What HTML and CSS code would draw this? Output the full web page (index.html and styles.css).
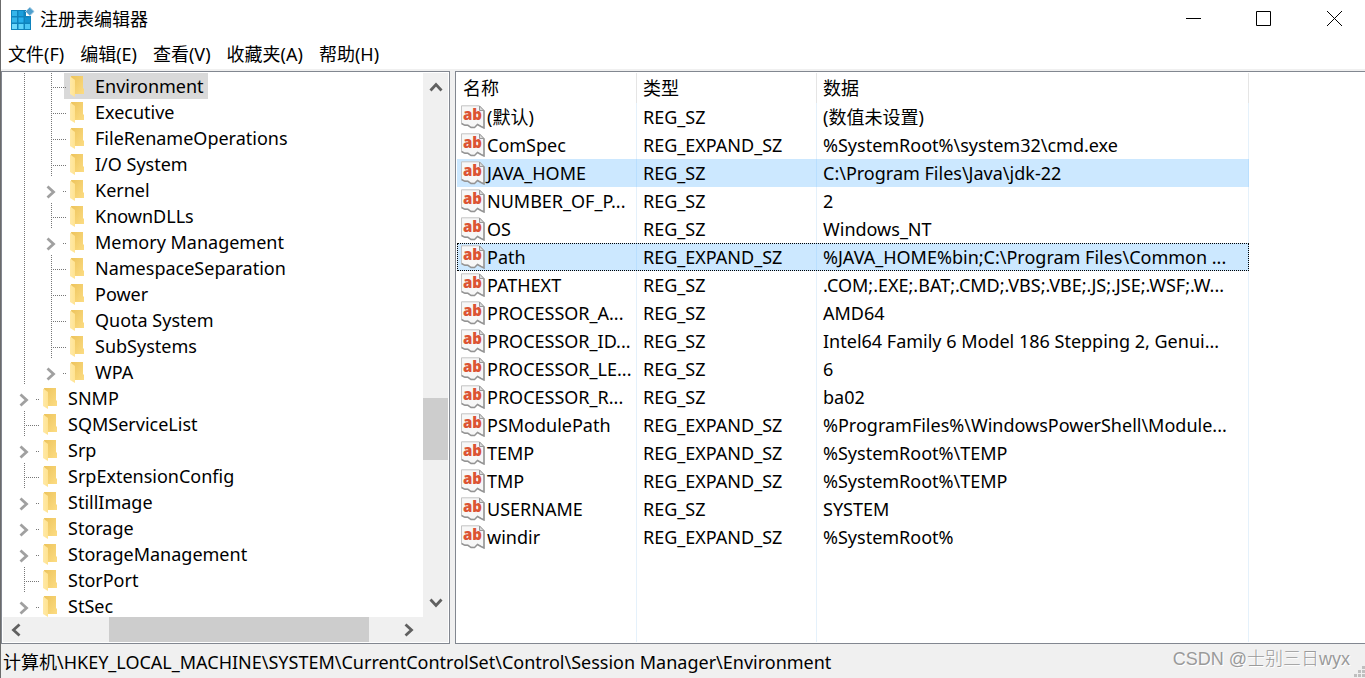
FILE: index.html
```html
<!DOCTYPE html>
<html lang="zh-CN">
<head>
<meta charset="utf-8">
<title>注册表编辑器</title>
<link rel="stylesheet" href="styles.css">
</head>
<body>
<svg class="defs" aria-hidden="true">
  <defs>
    <linearGradient id="foldBack" x1="0" x2="1" y1="0" y2="1"><stop offset="0" stop-color="#edc45c"/><stop offset="1" stop-color="#fcdc83"/></linearGradient>
    <linearGradient id="foldFront" x1="0" x2="1"><stop offset="0" stop-color="#ffe9a8"/><stop offset="1" stop-color="#ffe391"/></linearGradient>
    <symbol id="folder" viewBox="0 0 14 21">
      <path d="M1 0H13V12L14 13V18H3Z" fill="url(#foldBack)"/>
      <path d="M0 0.500L5 4V21L0 18Z" fill="url(#foldFront)"/>
    </symbol>
    <symbol id="value" viewBox="0 0 24 24">
      <path d="M.5 .8H18.500L23 5.500V23L19.500 21 16.500 19.500 13.500 22.500 9.500 22 6.500 20 3 20 .5 18.500Z" fill="#f7f7f7" stroke="#c4c4c4" stroke-width="1"/>
      <path d="M.5 18.500L4 20.300H7L10 22.500H13.500L16.500 19.500 20 21.500 23 23V5.500" fill="none" stroke="#949494" stroke-width="1.500"/>
      <path d="M18.500 1V5.500H23Z" fill="#dadada" stroke="#999"/>
      <text class="value-ab" x="2" y="15">ab</text>
    </symbol>
    <symbol id="chev" viewBox="0 0 10 14"><path d="M1.500 1.500L7.500 7L1.500 12.500" fill="none" stroke="currentColor" stroke-width="2.800"/></symbol>
  </defs>
</svg>

<div class="window">
  <header class="titlebar">
    <svg class="app-icon" viewBox="0 0 24 24" aria-hidden="true">
      <path d="M0 3H15V9H20V23H0Z" fill="#0f83bd"/>
      <path d="M1 4H6V9H1Z" fill="#35b5ea"/><path d="M7.500 4H12.500V9H7.500Z" fill="#1b9fdd"/>
      <path d="M1 10.500H6V15.500H1Z" fill="#35b5ea"/><path d="M7.500 10.500H12.500V15.500H7.500Z" fill="#28b0ee"/><path d="M14 10.500H19V15.500H14Z" fill="#1391d0"/>
      <path d="M1 17H6V22H1Z" fill="#6fd8fb"/><path d="M7.500 17H12.500V22H7.500Z" fill="#5fd2fa"/><path d="M14 17H19V22H14Z" fill="#4bc5f5"/>
      <path d="M18.800 .2L23.200 4.500L18.800 8.800L14.500 4.500Z" fill="#4f9fce" stroke="#b7d6e8"/>
    </svg>
    <h1 class="title">注册表编辑器</h1>
    <div class="window-controls">
      <button class="control" aria-label="最小化"><svg viewBox="0 0 15 15"><path d="M0 7.500H15" /></svg></button>
      <button class="control" aria-label="最大化"><svg viewBox="0 0 15 15"><path d="M.5 .5H14.500V14.500H.5Z"/></svg></button>
      <button class="control" aria-label="关闭"><svg viewBox="0 0 15 15"><path d="M0 0L15 15M15 0L0 15"/></svg></button>
    </div>
  </header>
  <nav class="menubar">
    <button>文件(F)</button><button>编辑(E)</button><button>查看(V)</button><button>收藏夹(A)</button><button>帮助(H)</button>
  </nav>
  <main class="panes">
    <section class="tree-pane">
      <ul class="tree" id="tree"></ul>
      <div class="scroll-v">
        <button aria-label="向上滚动"><svg class="up"><use href="#chev"/></svg></button>
        <div class="track-v"><div class="thumb-v"></div></div>
        <button aria-label="向下滚动"><svg class="down"><use href="#chev"/></svg></button>
      </div>
      <div class="scroll-h">
        <button aria-label="向左滚动"><svg class="left"><use href="#chev"/></svg></button>
        <div class="track-h"><div class="thumb-h"></div></div>
        <button aria-label="向右滚动"><svg><use href="#chev"/></svg></button>
      </div>
    </section>
    <section class="list-pane">
      <table class="values">
        <colgroup><col class="col-name"><col class="col-type"><col class="col-data"></colgroup>
        <thead><tr><th>名称</th><th>类型</th><th>数据</th></tr></thead>
        <tbody id="values"></tbody>
      </table>
      <div class="columns-rest"><span></span><span></span><span></span></div>
    </section>
  </main>
  <footer class="statusbar">
    <span>计算机\HKEY_LOCAL_MACHINE\SYSTEM\CurrentControlSet\Control\Session Manager\Environment</span>
    <svg class="grip" viewBox="0 0 11 11" aria-hidden="true"><path d="M8 0h3v3H8zM4 4h3v3H4zM8 4h3v3H8zM0 8h3v3H0zM4 8h3v3H4zM8 8h3v3H8z" fill="#bfbfbf"/></svg>
  </footer>
  <div class="watermark">CSDN @士别三日wyx</div>
</div>
<script src="app.js"></script>
</body>
</html>
```
FILE: styles.css
```css
* { box-sizing: border-box; }

body {
  margin: 0;
  font: 18px/26px "Noto Sans", "Noto Sans CJK SC", sans-serif;
  color: #000;
  background: #fff;
}

button {
  border: 0;
  padding: 0;
  background: none;
  font: inherit;
  color: inherit;
}

.defs { position: absolute; width: 0; height: 0; }

.window {
  position: relative;
  display: flex;
  flex-direction: column;
  height: 100vh;
  border-left: 1px solid #6b6b6b;
  overflow: hidden;
}

.titlebar {
  display: flex;
  align-items: center;
  height: 37px;
  padding-left: 10px;
}
.app-icon { width: 24px; height: 24px; margin-right: 5px; }
.title { margin: 0; font-size: 18px; font-weight: 400; }
.window-controls { display: flex; margin-left: auto; }
.control {
  display: flex;
  align-items: center;
  justify-content: center;
  width: 70px;
  height: 37px;
}
.control svg { width: 15px; height: 15px; fill: none; stroke: #000; }
.control:last-child { width: 62px; margin-left: 5px; }

.menubar {
  display: flex;
  align-items: center;
  gap: 16px;
  height: 34px;
  padding: 2px 0 0 7px;
  border-bottom: 2px solid #f0f0f0;
}

.panes {
  flex: 1;
  min-height: 0;
  display: grid;
  grid-template-columns: 449px 1fr;
  gap: 5px;
  background: #f0f0f0;
}

.tree-pane {
  display: grid;
  grid-template: minmax(0, 1fr) 25px / minmax(0, 1fr) 25px;
  min-height: 0;
  padding: 1px;
  border: 1px solid #828790;
  background: #fff;
}
.tree {
  margin: 0;
  padding: 0 0 0 7px;
  list-style: none;
  overflow: hidden;
  white-space: nowrap;
}
.node { display: flex; height: 26px; }
.guide { position: relative; flex: 0 0 27px; height: 26px; }
.guide.line {
  background: repeating-linear-gradient(#777 0 1px, transparent 1px 2px) 14px 0 / 1px 100% no-repeat;
}
.guide.branch::after {
  content: "";
  position: absolute;
  top: 14px;
  left: 14px;
  width: 15px;
  height: 1px;
  background: repeating-linear-gradient(90deg, #777 0 1px, transparent 1px 2px);
}
.guide.expander::after { left: 26px; width: 3px; }
.expander button { display: block; padding: 8px 0 0 9px; color: #a0a0a0; }
.expander svg { display: block; width: 10px; height: 14px; }
.label {
  display: flex;
  align-items: center;
  gap: 11px;
  padding: 0 4px 0 6px;
}
.label.selected { background: #d9d9d9; }
.label svg { width: 14px; height: 21px; }

.scroll-v, .scroll-h { display: flex; background: #f0f0f0; }
.scroll-v { grid-row: 1; grid-column: 2; flex-direction: column; }
.scroll-h { grid-row: 2; grid-column: 1 / 3; padding-right: 26px; }
.scroll-v button, .scroll-h button {
  display: flex;
  align-items: center;
  justify-content: center;
  flex: 0 0 28px;
  color: #606060;
}
.scroll-h button { flex-basis: 26px; }
.scroll-v svg, .scroll-h svg { width: 10px; height: 14px; }
.up { transform: rotate(-90deg); }
.down { transform: rotate(90deg); }
.left { transform: rotate(180deg); }
.track-v, .track-h { flex: 1; display: flex; }
.track-v { flex-direction: column; padding-top: 297px; }
.thumb-v { height: 62px; background: #cdcdcd; }
.track-h { padding-left: 80px; }
.thumb-h { width: 260px; background: #cdcdcd; }

.list-pane {
  display: flex;
  flex-direction: column;
  min-width: 0;
  min-height: 0;
  padding: 1px;
  border: 1px solid #828790;
  border-right: 0;
  background: #fff;
}
.values {
  flex: none;
  width: 792px;
  table-layout: fixed;
  border-collapse: collapse;
}
.col-name { width: 180px; }
.col-type { width: 180px; }
.col-data { width: 432px; }
.values th, .values td {
  padding: 0 0 0 6px;
  font-weight: 400;
  text-align: left;
  white-space: nowrap;
  background: linear-gradient(#e5f1fb, #e5f1fb) right / 1px 100% no-repeat;
}
.values th { height: 30px; background-image: linear-gradient(#e5e5e5, #e5e5e5); }
.values tbody td { height: 28px; }
.values tbody td:first-child { padding-left: 4px; }
.values .picked { background: #cce8ff; }
.values .picked td { background-image: linear-gradient(#b9dfff, #b9dfff); }
.values .focused { outline: 1px dotted #000; outline-offset: -1px; }
.name { display: flex; align-items: center; gap: 2px; }
.name svg { flex: none; width: 24px; height: 24px; }
.value-ab { font: 900 15px "Noto Sans", sans-serif; fill: #dc5434; }
.columns-rest {
  flex: 1;
  display: grid;
  grid-template-columns: 180px 180px 432px;
}
.columns-rest span { border-right: 1px solid #e5f1fb; }

.statusbar {
  display: flex;
  align-items: center;
  height: 34px;
  padding-left: 2px;
  background: #f0f0f0;
}
.statusbar span { padding-top: 2px; }
.grip { width: 11px; height: 11px; margin: auto 0 1px auto; }

.watermark {
  position: absolute;
  right: 15px;
  bottom: 6px;
  font-family: "Liberation Sans", "Noto Sans CJK SC", sans-serif;
  font-weight: 300;
  color: #9a9a9a;
  text-shadow: 1px 1px 0 #fff;
}
```
FILE: app.js
```js
// Each entry: depth, key name, whether it can be expanded.
const keys = [
  [2, "Environment"], [2, "Executive"], [2, "FileRenameOperations"], [2, "I/O System"],
  [2, "Kernel", true], [2, "KnownDLLs"], [2, "Memory Management", true],
  [2, "NamespaceSeparation"], [2, "Power"], [2, "Quota System"], [2, "SubSystems"],
  [2, "WPA", true], [1, "SNMP", true], [1, "SQMServiceList"], [1, "Srp", true],
  [1, "SrpExtensionConfig"], [1, "StillImage", true], [1, "Storage", true],
  [1, "StorageManagement", true], [1, "StorPort"], [1, "StSec", true],
];

const values = [
  ["(默认)", "REG_SZ", "(数值未设置)"],
  ["ComSpec", "REG_EXPAND_SZ", "%SystemRoot%\\system32\\cmd.exe"],
  ["JAVA_HOME", "REG_SZ", "C:\\Program Files\\Java\\jdk-22", "picked"],
  ["NUMBER_OF_P...", "REG_SZ", "2"],
  ["OS", "REG_SZ", "Windows_NT"],
  ["Path", "REG_EXPAND_SZ", "%JAVA_HOME%bin;C:\\Program Files\\Common ...", "picked focused"],
  ["PATHEXT", "REG_SZ", ".COM;.EXE;.BAT;.CMD;.VBS;.VBE;.JS;.JSE;.WSF;.W..."],
  ["PROCESSOR_A...", "REG_SZ", "AMD64"],
  ["PROCESSOR_ID...", "REG_SZ", "Intel64 Family 6 Model 186 Stepping 2, Genui..."],
  ["PROCESSOR_LE...", "REG_SZ", "6"],
  ["PROCESSOR_R...", "REG_SZ", "ba02"],
  ["PSModulePath", "REG_EXPAND_SZ", "%ProgramFiles%\\WindowsPowerShell\\Module..."],
  ["TEMP", "REG_EXPAND_SZ", "%SystemRoot%\\TEMP"],
  ["TMP", "REG_EXPAND_SZ", "%SystemRoot%\\TEMP"],
  ["USERNAME", "REG_SZ", "SYSTEM"],
  ["windir", "REG_EXPAND_SZ", "%SystemRoot%"],
];

document.getElementById("tree").innerHTML = keys.map(([depth, name, expandable], i) => {
  const parent = depth === 2 ? '<span class="guide line"></span>' : "";
  const own = expandable
    ? `<span class="guide branch expander"><button aria-label="展开 ${name}"><svg><use href="#chev"/></svg></button></span>`
    : '<span class="guide branch line"></span>';
  return `<li class="node">${parent}${own}<span class="label${i === 0 ? " selected" : ""}"><svg><use href="#folder"/></svg>${name}</span></li>`;
}).join("");

document.getElementById("values").innerHTML = values.map(([name, type, data, state = ""]) =>
  `<tr class="${state}"><td><div class="name"><svg><use href="#value"/></svg>${name}</div></td><td>${type}</td><td>${data}</td></tr>`
).join("");
```
